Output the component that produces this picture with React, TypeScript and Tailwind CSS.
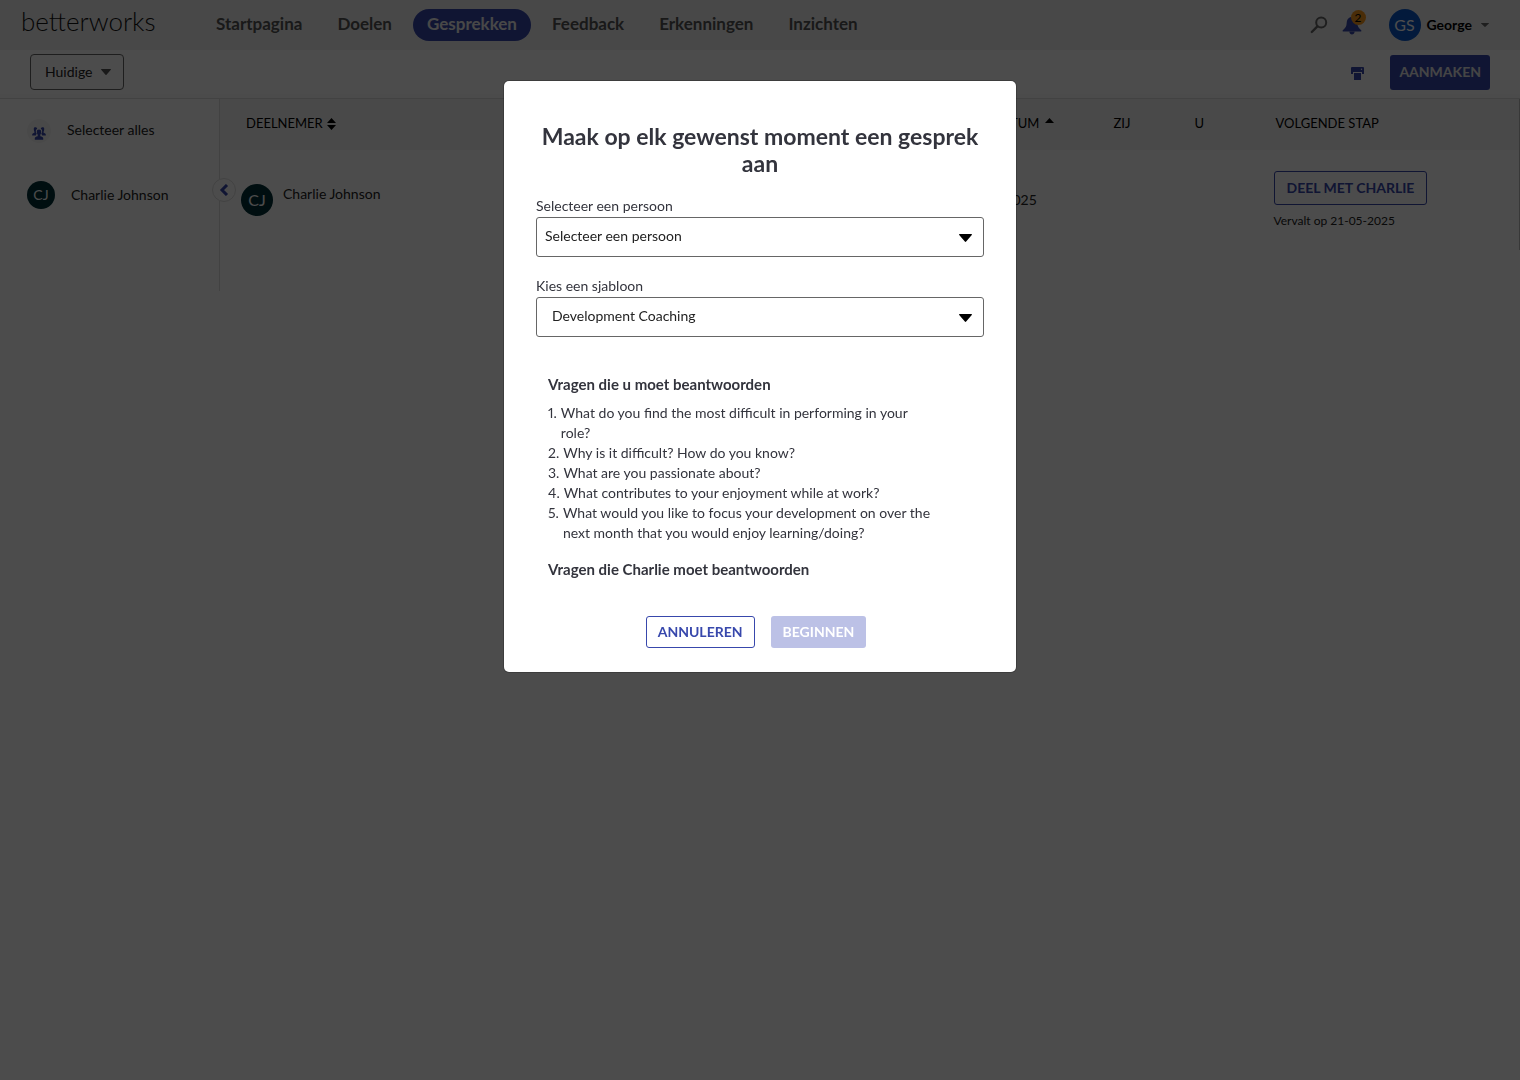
import React from 'react'

const navItems = ['Startpagina', 'Doelen', 'Gesprekken', 'Feedback', 'Erkenningen', 'Inzichten']

const questions = [
  'What do you find the most difficult in performing in your role?',
  'Why is it difficult? How do you know?',
  'What are you passionate about?',
  'What contributes to your enjoyment while at work?',
  'What would you like to focus your development on over the next month that you would enjoy learning/doing?',
]

function SearchIcon() {
  return (
    <svg width="18" height="18" viewBox="0 0 18 18" fill="none" stroke="#666" strokeLinecap="round">
      <circle cx="11.2" cy="6.5" r="5" strokeWidth="2" />
      <path d="M7.4 10.4 1.8 16" strokeWidth="2.4" />
    </svg>
  )
}

function BellIcon() {
  return (
    <svg width="20" height="19" viewBox="0 0 20 19" fill="#3848ac">
      <path d="M10 1C6.6 1 4.9 3.6 4.7 6.8 4.5 10.5 3.600 12 .8 14.2c-.5.5-.2 1.3.5 1.3h17.400c.7 0 1-.8.5-1.300-2.800-2.200-3.700-3.700-3.900-7.400C15.100 3.600 13.400 1 10 1Z" />
      <path d="M7.300 15.500h5.400c-.2 1.800-1.300 3-2.700 3s-2.500-1.200-2.700-3Z" />
    </svg>
  )
}

function PrintIcon() {
  return (
    <svg width="13" height="13" viewBox="0 0 13 13" fill="#3848ac">
      <path d="M1 0h11a1 1 0 0 1 1 1v6h-2V5H2v2H0V1a1 1 0 0 1 1-1Z" />
      <path d="M3 6h7v7H3z" />
      <circle cx="10.500" cy="2.300" r=".7" fill="#fff" />
    </svg>
  )
}

function GroupIcon() {
  return (
    <svg width="14" height="13" viewBox="0 0 14 13" fill="#3848ac">
      <path d="M1.800 1.600C1.800.7 2.500.2 3.400.2S5.200.8 5.200 1.800c-.9.6-1.400 1.400-1.300 2.600 0 .9.3 1.600.8 2.200L3.800 8.600H.2V7.400c.2-.8 1-1.200 2.200-1.600V4.800c-.4-.5-.6-1.500-.6-3.200Z" />
      <path d="M12.200 1.600C12.200.7 11.500.2 10.600.2S8.800.8 8.800 1.800c.9.6 1.400 1.400 1.300 2.600 0 .9-.3 1.600-.8 2.200l.9 2h3.600V7.400c-.2-.8-1-1.200-2.200-1.600V4.800c.4-.5.6-1.500.6-3.200Z" />
      <path d="M7 2.600c1.400 0 2.200.8 2.200 2.200 0 1.200-.3 2.300-.9 3v1.400c1.800.5 2.700.9 2.900 1.800v1.800H2.800V11c.2-.9 1.100-1.300 2.900-1.800V7.800c-.6-.7-.9-1.800-.9-3 0-1.400.8-2.200 2.200-2.200Z" />
    </svg>
  )
}

function CaretDown({ className }: { className: string }) {
  return (
    <svg className={className} viewBox="0 0 12 7" preserveAspectRatio="none" fill="currentColor">
      <path d="M.6 0h10.800c.5 0 .8.5.4.9L6.600 6.600a.8.8 0 0 1-1.200 0L.2.900C-.2.500.1 0 .6 0Z" />
    </svg>
  )
}

function Header() {
  return (
    <header className="flex h-[50px] items-center bg-[#f2f2f2] pl-[21px] pr-[31px]">
      <a href="#" className="w-[181px] pb-2 text-[26px] leading-8 font-light text-[#111]">
        betterworks
      </a>
      <nav className="flex flex-1 gap-[7px]">
        {navItems.map((item) => (
          <a
            key={item}
            href="#"
            aria-current={item === 'Gesprekken' ? 'page' : undefined}
            className={
              item === 'Gesprekken'
                ? 'h-8 rounded-full bg-[#3848ac] px-3.5 text-[17px] leading-[30px] font-bold text-[#f0f0f0]'
                : 'h-8 px-3.5 text-[17px] leading-[30px] font-bold text-[#555]'
            }
          >
            {item}
          </a>
        ))}
      </nav>
      <button aria-label="Zoeken" className="mr-3.5">
        <SearchIcon />
      </button>
      <button aria-label="Meldingen" className="relative mr-[27px]">
        <BellIcon />
        <span className="absolute -top-1.5 left-[9px] size-[15px] rounded-full bg-[#f8981d] text-center text-xs leading-[15px] text-black">
          2
        </span>
      </button>
      <button className="flex items-center text-sm font-bold text-black">
        <span className="mr-1.5 size-8 rounded-full bg-[#0a58ca] text-center text-base leading-8 font-normal text-white">
          GS
        </span>
        George
        <CaretDown className="ml-[9px] h-1 w-2 text-[#666]" />
      </button>
    </header>
  )
}

function Toolbar() {
  return (
    <div className="flex h-[49px] items-start border-b border-[#dedede] bg-white px-[30px] pt-1 shadow-[inset_0_-4px_0_#fafafa]">
      <button className="flex h-9 items-center gap-2 rounded border border-[#666] pl-3.5 pr-3 text-sm text-[#222]">
        Huidige
        <CaretDown className="h-1.5 w-2.5 text-[#555]" />
      </button>
      <div className="flex-1" />
      <button aria-label="Afdrukken" className="mt-[13px] mr-[26px]">
        <PrintIcon />
      </button>
      <button className="mt-px h-[35px] rounded-[3px] bg-[#3848ac] px-[9px] pb-0.5 text-sm font-bold text-[#e8e8e8]">
        AANMAKEN
      </button>
    </div>
  )
}

function Sidebar() {
  return (
    <aside className="relative h-[192px] w-[220px] shrink-0 border-r border-[#dedede] text-sm text-[#222]">
      <button className="mt-5 ml-[27px] flex items-center">
        <span className="mr-4 flex size-6 items-center justify-center rounded-full bg-[#f5f5f5] pt-1">
          <GroupIcon />
        </span>
        <span className="pb-0.5">Selecteer alles</span>
      </button>
      <button className="mt-[38px] ml-[27px] flex items-center">
        <span className="mr-4 size-7 rounded-full bg-[#013038] text-center leading-7 text-white">CJ</span>
        Charlie Johnson
      </button>
      <button
        aria-label="Inklappen"
        className="absolute top-[79px] -right-[17px] flex size-6 items-center justify-center rounded-full border border-[#dedede] bg-white"
      >
        <svg width="10" height="12" viewBox="0 0 10 12" fill="none" stroke="#3848ac" strokeWidth="3">
          <path d="M8 1 3 6l5 5" />
        </svg>
      </button>
    </aside>
  )
}

function Conversations() {
  return (
    <table className="flex-1 table-fixed border-r border-[#bbb] text-left text-sm text-[#222]">
      <colgroup>
        <col />
        <col className="w-[150px]" />
        <col className="w-[81px]" />
        <col className="w-[81px]" />
        <col className="w-[246px]" />
      </colgroup>
      <thead>
        <tr className="h-[51px] bg-[#f5f5f5] text-[13px] text-black">
          <th className="pb-0.5 pl-[26px] font-normal">
            <button className="flex items-center gap-1">
              DEELNEMER
              <svg width="9" height="12" viewBox="0 0 9 12">
                <path d="M4.500 0 9 5H0zM4.500 12 0 7h9z" />
              </svg>
            </button>
          </th>
          <th className="pb-0.5 font-normal">
            <button className="flex items-center gap-1.5">
              EINDDATUM
              <svg width="9" height="12" viewBox="0 0 9 12">
                <path d="M4.500 0 9 5H0z" />
              </svg>
            </button>
          </th>
          <th className="pb-0.5 pl-0.5 font-normal">ZIJ</th>
          <th className="pb-0.5 pl-0.5 font-normal">U</th>
          <th className="pb-0.5 pl-0.5 font-normal">VOLGENDE STAP</th>
        </tr>
      </thead>
      <tbody>
        <tr className="h-[100px]">
          <td className="pl-[21px]">
            <div className="flex gap-2.5">
              <span className="size-8 rounded-full bg-[#013038] text-center text-base leading-8 text-white">CJ</span>
              <a href="#">Charlie Johnson</a>
            </div>
          </td>
          <td>21-05-2025</td>
          <td />
          <td />
          <td>
            <button className="h-[34px] rounded-[3px] border border-[#3848ac] px-3 text-sm font-bold text-[#3848ac]">
              DEEL MET CHARLIE
            </button>
            <p className="mt-2 text-xs">Vervalt op 21-05-2025</p>
          </td>
        </tr>
      </tbody>
    </table>
  )
}

function SelectField({
  id,
  label,
  value,
  selectClass,
}: {
  id: string
  label: string
  value: string
  selectClass: string
}) {
  return (
    <div className="mt-5">
      <label htmlFor={id} className="block h-5 text-sm leading-[18px]">
        {label}
      </label>
      <div className="relative">
        <select id={id} className={selectClass}>
          <option>{value}</option>
        </select>
        <CaretDown className="pointer-events-none absolute top-[17px] right-3 h-2 w-[13px] text-black" />
      </div>
    </div>
  )
}

function Modal() {
  return (
    <div className="fixed inset-0 flex items-start justify-center bg-black/70 pt-[81px]">
      <div
        role="dialog"
        aria-modal="true"
        aria-labelledby="modal-title"
        className="w-full max-w-[512px] rounded-[5px] bg-white px-8 pt-[42px] pb-6 text-[#33343d] shadow-[0_0_0_1px_rgba(0,0,0,0.2)]"
      >
        <h1 id="modal-title" className="text-center text-[23px] leading-[27px] font-bold">
          Maak op elk gewenst moment een gesprek aan
        </h1>
        <SelectField
          id="person"
          label="Selecteer een persoon"
          value="Selecteer een persoon"
          selectClass="h-10 w-full appearance-none rounded-[3px] border border-[#666] bg-white pb-0.5 pl-2 pr-8 text-sm text-[#222]"
        />
        <SelectField
          id="template"
          label="Kies een sjabloon"
          value="Development Coaching"
          selectClass="h-10 w-full appearance-none rounded-[3px] border border-[#666] bg-white pb-0.5 pl-[15px] pr-8 text-sm text-[#222]"
        />
        <section className="mt-[37px] px-3">
          <h2 className="text-[15px] leading-5 font-bold">Vragen die u moet beantwoorden</h2>
          <ol className="mt-[9px] max-w-[388px] text-sm leading-5 proportional-nums">
            {questions.map((question, i) => (
              <li key={question} className="flex gap-1">
                <span>{i + 1}.</span>
                <span>{question}</span>
              </li>
            ))}
          </ol>
          <h2 className="mt-4 text-[15px] leading-5 font-bold">Vragen die Charlie moet beantwoorden</h2>
        </section>
        <div className="mt-[37px] flex justify-center gap-4 pr-2 text-sm font-bold">
          <button className="h-8 rounded-[3px] border border-[#3848ac] px-[11px] text-[#3848ac]">ANNULEREN</button>
          <button disabled className="h-8 rounded-[3px] bg-[#bcc1e6] px-3 text-white">
            BEGINNEN
          </button>
        </div>
      </div>
    </div>
  )
}

export default function App() {
  return (
    <div className="min-h-screen bg-white font-['Lato',sans-serif]">
      <Header />
      <Toolbar />
      <main className="flex items-start">
        <Sidebar />
        <Conversations />
      </main>
      <Modal />
    </div>
  )
}
